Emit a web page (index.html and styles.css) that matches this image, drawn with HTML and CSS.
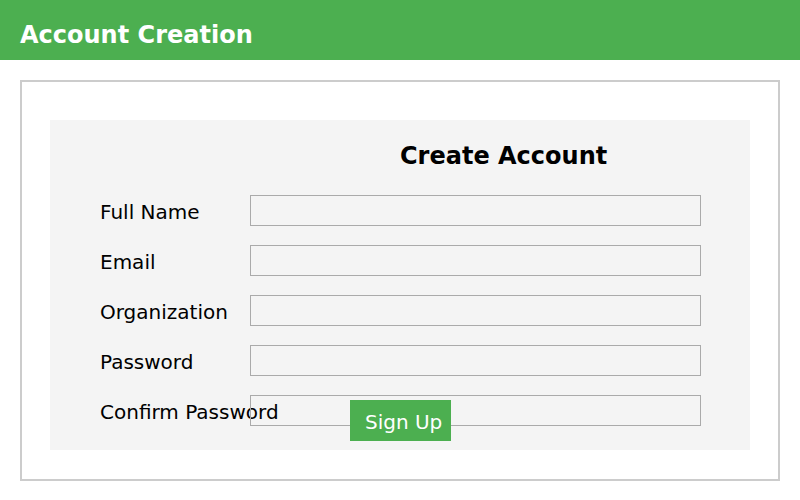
FILE: index.html
```html
<!DOCTYPE html>
<html>
<head>
<meta charset="utf-8">
<link rel="stylesheet" href="styles.css">
</head>
<body>
<header class="topbar">Account Creation</header>
<main class="frame">
  <form class="panel">
    <h2 class="panel-title">Create Account</h2>
    <div class="rows">
      <div class="row"><label class="label">Full Name</label><input class="field" type="text"></div>
      <div class="row"><label class="label">Email</label><input class="field" type="text"></div>
      <div class="row"><label class="label">Organization</label><input class="field" type="text"></div>
      <div class="row"><label class="label">Password</label><input class="field" type="password"></div>
      <div class="row"><label class="label">Confirm Password</label><input class="field" type="password"></div>
    </div>
    <button class="signup" type="button">Sign Up</button>
  </form>
</main>
</body>
</html>
```
FILE: styles.css
```css
html, body {
  margin: 0;
  padding: 0;
  background: #ffffff;
  font-family: "DejaVu Sans", sans-serif;
  color: #000;
}
.topbar {
  box-sizing: border-box;
  height: 60px;
  padding: 21px 20px 0;
  background: #4caf50;
  color: #ffffff;
  font-size: 24px;
  font-weight: bold;
  line-height: 28px;
}
.frame {
  display: block;
  margin: 20px;
  border: 2px solid #cccccc;
  padding: 38px 28px 28px;
  height: 331px;
}
.panel {
  position: relative;
  margin: 0;
  background: #f4f4f4;
  padding: 22px 0 24px 50px;
  height: 330px;
  box-sizing: border-box;
}
.panel-title {
  margin: 0;
  padding-left: 300px;
  font-size: 24px;
  font-weight: bold;
  line-height: 28px;
}
.rows {
  margin-top: 25px;
  display: flex;
  flex-direction: column;
  gap: 19px;
}
.row {
  display: flex;
  align-items: flex-start;
  height: 31px;
}
.label {
  width: 150px;
  padding-top: 6px;
  font-size: 20px;
  line-height: 23px;
  white-space: nowrap;
}
.field {
  box-sizing: border-box;
  width: 451px;
  height: 31px;
  margin: 0;
  border: 1px solid #aaaaaa;
  background: transparent;
  padding: 0;
  outline: none;
}
.signup {
  position: absolute;
  left: 300px;
  top: 280px;
  box-sizing: border-box;
  width: 101px;
  height: 41px;
  margin: 0;
  padding: 2px 0 0 15px;
  border: none;
  background: #4caf50;
  color: #ffffff;
  font-family: "DejaVu Sans", sans-serif;
  font-size: 20px;
  text-align: left;
}
```
